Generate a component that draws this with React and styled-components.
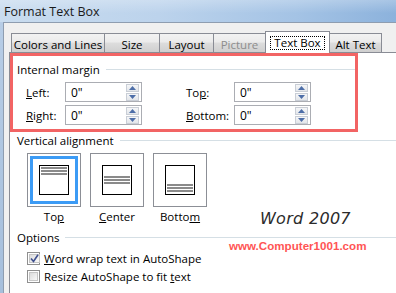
import styled, { createGlobalStyle } from "styled-components";

const GlobalStyle = createGlobalStyle`
  html, body {
    margin: 0;
    padding: 0;
    background: #f0f0f0;
  }
  * { box-sizing: border-box; }
`

const Window = styled.div`
  width: 396px;
  height: 293px;
  overflow: hidden;
  display: flex;
  flex-direction: column;
  font-family: "Open Sans", "Noto Sans", sans-serif;
  font-size: 11.5px;
  color: #000;
  background: #f0f0f0;
`

const TitleBar = styled.div`
  height: 22px;
  flex: none;
  padding-left: 4px;
  display: flex;
  align-items: center;
  font-size: 12.5px;
  color: #1a1a1a;
  background:
    linear-gradient(to bottom, rgba(255,255,255,0.25), rgba(255,255,255,0) 60%),
    linear-gradient(to right, #c9dcef 0%, #bcd3ec 40%, #a4c3e5 75%, #8cb2dc 100%);
`

const Frame = styled.div`
  flex: 1;
  display: flex;
  background: linear-gradient(to bottom, #b7cde6, #a6bfdc);
`

const Body = styled.div`
  flex: 1;
  margin-left: 3px;
  border-left: 1px solid #8e9db0;
  border-top: 1px solid #8e9db0;
  background: #f0f0f0;
  display: flex;
  flex-direction: column;
  padding-top: 8px;
`

const TabStrip = styled.div`
  display: flex;
  align-items: flex-end;
  padding-left: 7px;
  height: 22px;
  margin-bottom: -1px;
  position: relative;
  z-index: 1;
`

const Tab = styled.div`
  width: ${(p) => p.w}px;
  height: ${(p) => (p.active ? 22 : 19)}px;
  margin-left: -1px;
  margin-bottom: ${(p) => (p.active ? 0 : 1)}px;
  border: 1px solid #898c95;
  border-bottom: none;
  display: flex;
  align-items: center;
  justify-content: center;
  padding-top: ${(p) => (p.active ? 0 : 3)}px;
  color: ${(p) => (p.disabled ? "#8d8d8d" : "#000")};
  background: ${(p) =>
    p.active ? "#fff" : "linear-gradient(to bottom, #f2f2f2 0%, #ebebeb 45%, #dddddd 50%, #cfcfcf 100%)"};
  white-space: nowrap;
  &:first-child { margin-left: 0; }
`

const Focus = styled.span`
  border: 1px dotted #000;
  padding: 0 3px;
  line-height: 12px;
  margin-top: 1px;
`

const Panel = styled.div`
  flex: 1;
  margin-left: 5px;
  background: #fff;
  border-top: 1px solid #898c95;
  border-left: 1px solid #898c95;
  position: relative;
`

const Highlight = styled.div`
  width: 348px;
  border: 3px solid #f26464;
  padding: 5px 0 4px 4px;
`

const GroupHeader = styled.div`
  display: flex;
  align-items: center;
  height: 16px;
  &::after {
    content: "";
    flex: 1;
    height: 1px;
    margin-left: 6px;
    background: #d5dfe5;
  }
`

const MarginGrid = styled.div`
  margin-top: 5px;
  margin-left: 9px;
  display: grid;
  grid-template-columns: 39px 77px 44px 48px 77px;
  grid-auto-rows: 20px;
  row-gap: 3px;
  align-items: center;
`

const Label = styled.span`
  white-space: nowrap;
  u { text-decoration: underline; text-underline-offset: 1px; }
`

const Spin = styled.div`
  height: 20px;
  border: 1px solid #abadb3;
  background: #fff;
  display: flex;
  align-items: center;
  justify-content: space-between;
  padding: 0 2px 0 5px;
  font-size: 12px;
`

const SpinButtons = styled.div`
  display: flex;
  flex-direction: column;
  gap: 1px;
`

const SpinBtn = styled.div`
  width: 13px;
  height: 8px;
  border: 1px solid #c9ced6;
  background: linear-gradient(to bottom, #f5f6f8, #e3e6ea);
  display: flex;
  align-items: center;
  justify-content: center;
`

const Section = styled.div`
  padding-left: 7px;
`

const AlignRow = styled.div`
  display: flex;
  gap: 9px;
  margin-top: 5px;
  margin-left: 10px;
`

const AlignItem = styled.div`
  width: 54px;
  display: flex;
  flex-direction: column;
  align-items: center;
`

const AlignBtn = styled.div`
  width: 54px;
  height: 54px;
  border: 1px solid #8c8f96;
  padding: 2px;
  background: #fff;
  display: flex;
`

const AlignInner = styled.div`
  flex: 1;
  border: 3px solid ${(p) => (p.selected ? "#3c9bf5" : "transparent")};
  display: flex;
  align-items: center;
  justify-content: center;
`

const Page = styled.div`
  width: 30px;
  height: 30px;
  border: 1px solid #000;
  display: flex;
  flex-direction: column;
  justify-content: ${(p) => p.justify};
  padding: 1px 1px 2px;
  background: #fff;
`

const Lines = styled.div`
  height: 8px;
  background: repeating-linear-gradient(
    to bottom,
    #8a8a8a 0px,
    #8a8a8a 2px,
    #fff 2px,
    #fff 3px
  );
`

const AlignLabel = styled.div`
  margin-top: 2px;
  height: 16px;
  line-height: 16px;
`

const OptionsHeader = styled(GroupHeader)`
  margin-top: 4px;
`

const CheckRow = styled.div`
  display: flex;
  align-items: center;
  gap: 4px;
  height: 18px;
  margin-left: 10px;
`

const CheckList = styled.div`
  margin-top: 4px;
`

const Box = styled.div`
  width: 13px;
  height: 13px;
  border: 1px solid #8f8f8f;
  padding: 1px;
  background: #fff;
  display: flex;
`

const BoxFill = styled.div`
  flex: 1;
  border: 1px solid #c6c6c6;
  background: linear-gradient(135deg, #dcdcdc, #fafafa);
  display: flex;
  align-items: center;
  justify-content: center;
`

const Annotation = styled.div`
  position: absolute;
  left: ${(p) => p.x}px;
  top: ${(p) => p.y}px;
  white-space: nowrap;
`

const WordMark = styled(Annotation)`
  font-family: "DejaVu Sans", sans-serif;
  font-style: oblique;
  font-size: 16px;
  color: #2b2b2b;
  letter-spacing: 0.3px;
`

const Url = styled(Annotation)`
  font-family: "Liberation Sans", Arial, sans-serif;
  font-weight: bold;
  font-size: 11.6px;
  color: #ff5555;
`

const Arrow = ({ up }) => (
  <svg width="7" height="4" viewBox="0 0 7 4">
    <path d={up ? "M0 4 L3.5 0 L7 4 Z" : "M0 0 L3.5 4 L7 0 Z"} fill="#4d6ea8" />
  </svg>
)

const SpinBox = () => (
  <Spin>
    <span>0"</span>
    <SpinButtons>
      <SpinBtn><Arrow up /></SpinBtn>
      <SpinBtn><Arrow /></SpinBtn>
    </SpinButtons>
  </Spin>
)

const Check = ({ checked }) => (
  <Box>
    <BoxFill>
      {checked && (
        <svg width="9" height="9" viewBox="0 0 9 9">
          <path d="M1 4.5 L3.5 7.5 L8 0.8" stroke="#3e4f8e" strokeWidth="1.6" fill="none" />
        </svg>
      )}
    </BoxFill>
  </Box>
)

const tabs = [
  { label: "Colors and Lines", w: 94 },
  { label: "Size", w: 56 },
  { label: "Layout", w: 55 },
  { label: "Picture", w: 53, disabled: true },
  { label: "Text Box", w: 65, active: true },
  { label: "Alt Text", w: 53 },
]

const aligns = [
  { label: <>To<u>p</u></>, justify: "flex-start", selected: true },
  { label: <><u>C</u>enter</>, justify: "center" },
  { label: <>Botto<u>m</u></>, justify: "flex-end" },
]

function App() {
  return (
    <Window>
      <GlobalStyle />
      <TitleBar>Format Text Box</TitleBar>
      <Frame>
        <Body>
          <TabStrip>
            {tabs.map((t) => (
              <Tab key={t.label} w={t.w} active={t.active} disabled={t.disabled}>
                {t.active ? <Focus>{t.label}</Focus> : t.label}
              </Tab>
            ))}
          </TabStrip>
          <Panel>
            <Highlight>
              <GroupHeader>Internal margin</GroupHeader>
              <MarginGrid>
                <Label><u>L</u>eft:</Label>
                <SpinBox />
                <span />
                <Label>To<u>p</u>:</Label>
                <SpinBox />
                <Label><u>R</u>ight:</Label>
                <SpinBox />
                <span />
                <Label><u>B</u>ottom:</Label>
                <SpinBox />
              </MarginGrid>
            </Highlight>

            <Section>
              <GroupHeader>Vertical alignment</GroupHeader>
              <AlignRow>
                {aligns.map((a, i) => (
                  <AlignItem key={i}>
                    <AlignBtn>
                      <AlignInner selected={a.selected}>
                        <Page justify={a.justify}>
                          <Lines />
                        </Page>
                      </AlignInner>
                    </AlignBtn>
                    <AlignLabel><Label>{a.label}</Label></AlignLabel>
                  </AlignItem>
                ))}
              </AlignRow>

              <OptionsHeader>Options</OptionsHeader>
              <CheckList>
                <CheckRow>
                  <Check checked />
                  <Label><u>W</u>ord wrap text in AutoShape</Label>
                </CheckRow>
                <CheckRow>
                  <Check />
                  <Label>Resize AutoShape to fit <u>t</u>ext</Label>
                </CheckRow>
              </CheckList>
            </Section>

            <WordMark x={250} y={156}>Word 2007</WordMark>
            <Url x={219} y={186}>www.Computer1001.com</Url>
          </Panel>
        </Body>
      </Frame>
    </Window>
  );
}

export default App;
